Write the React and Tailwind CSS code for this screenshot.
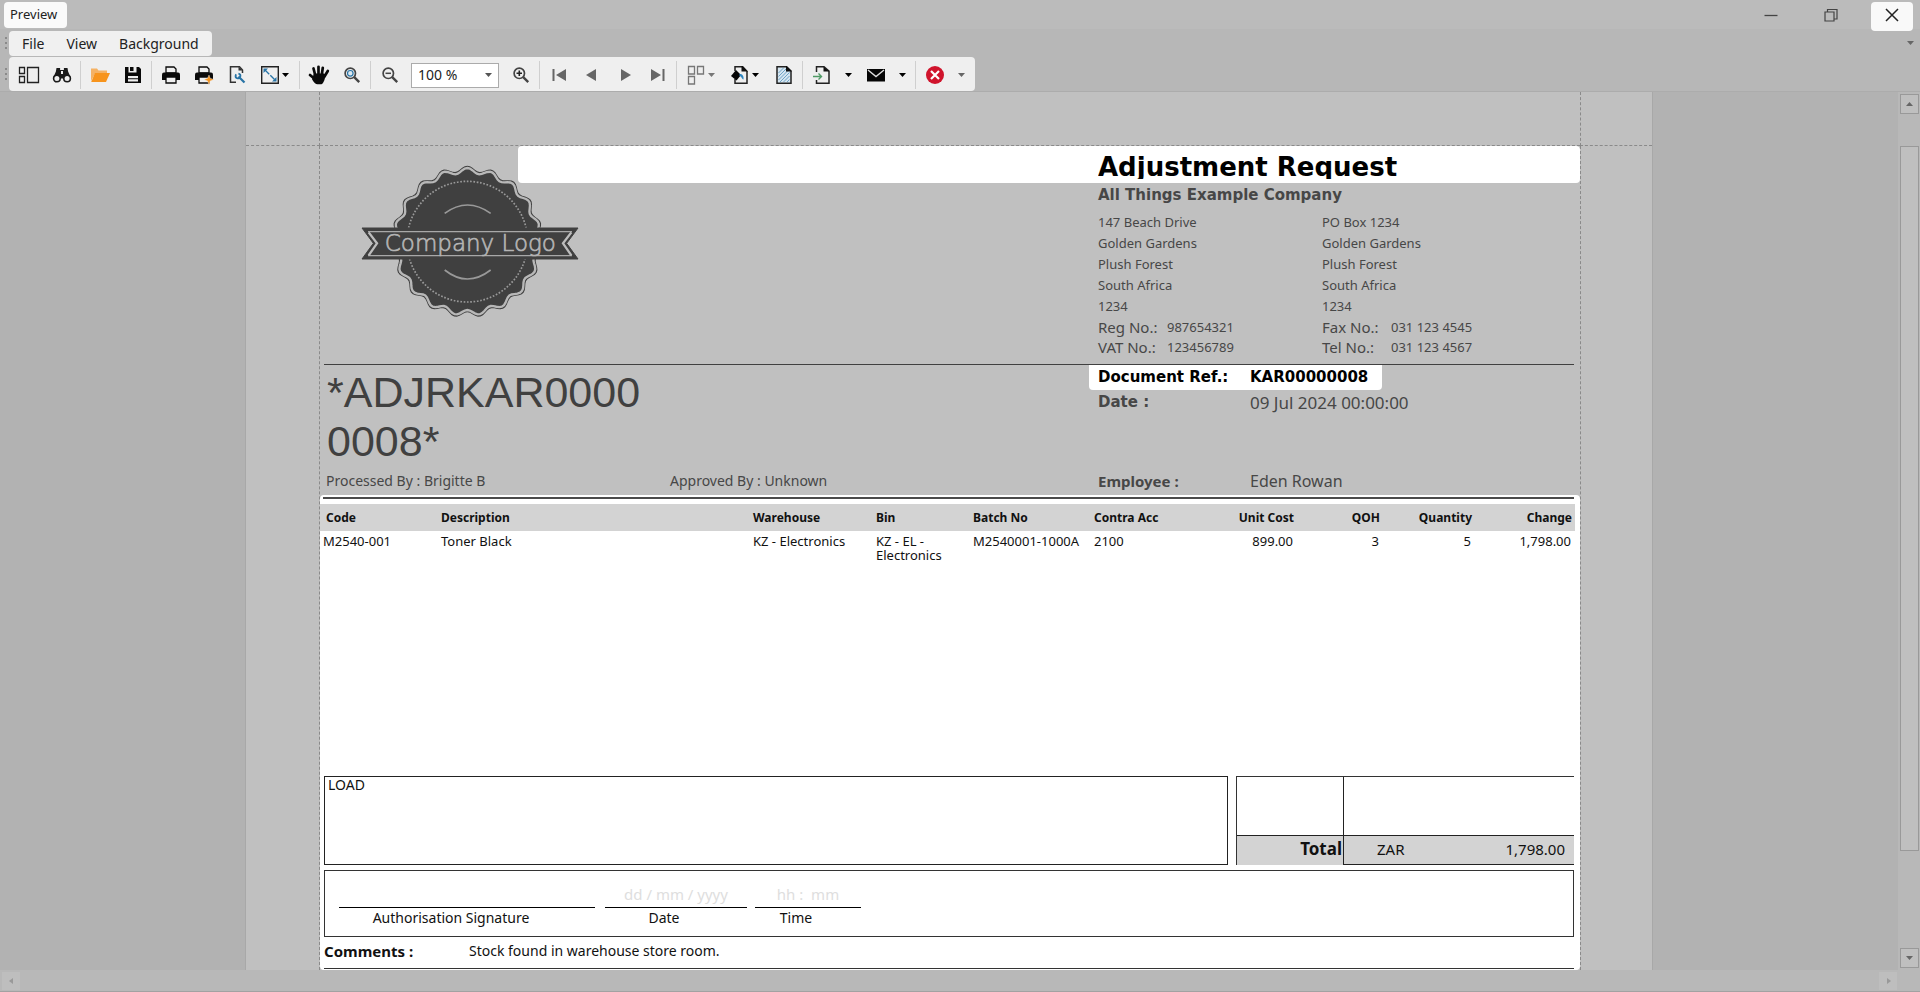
const NOTO = "font-['Noto_Sans',sans-serif]"
const DEJAVU = "font-['DejaVu_Sans',sans-serif]"

const columns = [
  { key: 'code', label: 'Code', width: 'w-[118px]' },
  { key: 'description', label: 'Description', width: 'w-[312px]' },
  { key: 'warehouse', label: 'Warehouse', width: 'w-[123px]' },
  { key: 'bin', label: 'Bin', width: 'w-[97px]' },
  { key: 'batch', label: 'Batch No', width: 'w-[121px]' },
  { key: 'contra', label: 'Contra Acc', width: 'w-[100px]' },
  { key: 'cost', label: 'Unit Cost', width: 'w-[106px]', right: true },
  { key: 'qoh', label: 'QOH', width: 'w-[86px]', right: true },
  { key: 'quantity', label: 'Quantity', width: 'w-[92px]', right: true },
  { key: 'change', label: 'Change', right: true },
]

const lines = [
  {
    code: 'M2540-001',
    description: 'Toner Black',
    warehouse: 'KZ - Electronics',
    bin: 'KZ - EL - Electronics',
    batch: 'M2540001-1000A',
    contra: '2100',
    cost: '899.00',
    qoh: '3',
    quantity: '5',
    change: '1,798.00',
  },
]

const streetAddress = ['147 Beach Drive', 'Golden Gardens', 'Plush Forest', 'South Africa', '1234']
const postalAddress = ['PO Box 1234', 'Golden Gardens', 'Plush Forest', 'South Africa', '1234']

function Svg({ w = 20, h = 20, children, className = '' }) {
  return (
    <svg width={w} height={h} viewBox={`0 0 ${w} ${h}`} fill="none" className={`shrink-0 ${className}`} aria-hidden="true">
      {children}
    </svg>
  )
}

/* ---------- toolbar icons ---------- */

const ThumbnailsIcon = () => (
  <Svg w={22} h={18}>
    <path d="M1.5 1.5h5v6h-5zM1.5 10.5h5v6h-5zM9.5 1.5h11v15h-11z" stroke="#222" strokeWidth="1.3" />
  </Svg>
)

const BinocularsIcon = () => (
  <Svg>
    <path d="M4.5 3h3.6v2h3.8V3h3.6l.6 3.5 2.6 6H1.3l2.6-6z" fill="#1a1a1a" />
    <path d="M9 6h2v3H9z" fill="#efefef" />
    <circle cx="4.9" cy="13.5" r="3.3" fill="#efefef" stroke="#1a1a1a" strokeWidth="1.6" />
    <circle cx="15.1" cy="13.5" r="3.3" fill="#efefef" stroke="#1a1a1a" strokeWidth="1.6" />
    <path d="M8 11h4v2.5H8z" fill="#1a1a1a" />
  </Svg>
)

const FolderIcon = () => (
  <Svg>
    <path d="M1 16V3.5h6L8.5 5.500H17V8H5.5z" fill="#f5b264" />
    <path d="M5 8h15l-4 9H1.2z" fill="#f7941d" />
  </Svg>
)

const SaveIcon = () => (
  <Svg w={16} h={18}>
    <path d="M0 1h14l2 2v14H0z" fill="#0a0a0a" />
    <path d="M3.5 1h8v5.5h-8zM3 10h10v5.5H3z" fill="#efefef" />
    <path d="M5 1h3.5v4H5zM3 12.2h10v1H3z" fill="#0a0a0a" />
  </Svg>
)

const PrinterShape = () => (
  <>
    <path d="M5 2h8l2 2v4H5z" fill="#efefef" stroke="#0a0a0a" strokeWidth="1.3" />
    <path d="M3 7.5h14q2 0 2 2V15H1V9.5q0-2 2-2z" fill="#0a0a0a" />
    <path d="M5 12h10v6H5z" fill="#efefef" stroke="#0a0a0a" strokeWidth="1.3" />
  </>
)

const PrintIcon = () => (
  <Svg><PrinterShape /></Svg>
)

const QuickPrintIcon = () => (
  <Svg>
    <PrinterShape />
    <path d="M15 10l1.2 3.300 3.800 1.200-3.800 1.400L15 20l-1.400-4.100L10 14.500l3.600-1.200z" fill="#f7941d" stroke="#efefef" strokeWidth=".4" />
  </Svg>
)

const PageSetupIcon = () => (
  <Svg w={18} h={20}>
    <path d="M14.5 8V5l-3-3.300h-9v15.5H8" stroke="#333" strokeWidth="1.5" />
    <path d="M10.5 1.5v4h4z" fill="#333" />
    <path d="M10.5 11.5l6 6" stroke="#2874a6" strokeWidth="2.2" />
    <circle cx="10" cy="11" r="2.400" stroke="#2874a6" strokeWidth="1.800" strokeDasharray="11.500 4" transform="rotate(-80 10 11)" />
  </Svg>
)

const ScaleIcon = () => (
  <Svg>
    <path d="M1.7 1.7h16.6v16.6H1.7z" stroke="#222" strokeWidth="1.4" />
    <path d="M5 5l10 10" stroke="#2874a6" strokeWidth="1.3" strokeDasharray="6 1.5" />
    <path d="M3.5 3.5H8L3.5 8zM16.5 16.5H12l4.5-4.5z" fill="#2874a6" />
  </Svg>
)

const HandIcon = () => (
  <Svg w={22} h={20}>
    <path d="M7.2 10L5.500 3.5M10.500 9V1.8M13.800 9.500l1-6.700M16.500 11.500l3.300-5.5M8 15l-6-5" stroke="#0a0a0a" strokeWidth="2.700" strokeLinecap="round" />
    <path d="M5.9 8.500h10l2.100 1.500c-1.200 2-1 5-2.500 7-.7 1.500-1.500 2.300-3 2.300H9.500c-2 0-3.500-1.500-5.500-5z" fill="#0a0a0a" />
  </Svg>
)

function Lens({ children }) {
  return (
    <Svg w={18} h={18}>
      <circle cx="7.3" cy="7.3" r="5.2" stroke="#444" strokeWidth="1.7" />
      <path d="M11.2 11.2l5 5" stroke="#444" strokeWidth="2.4" />
      {children}
    </Svg>
  )
}

const FirstIcon = () => (
  <Svg w={16} h={16}><path d="M1.5 2h2v12h-2zM15 2v12L5 8z" fill="#666" /></Svg>
)
const PrevIcon = () => (
  <Svg w={16} h={16}><path d="M12 2v12L2 8z" fill="#666" /></Svg>
)
const NextIcon = () => (
  <Svg w={16} h={16}><path d="M4 2v12l10-6z" fill="#666" /></Svg>
)
const LastIcon = () => (
  <Svg w={16} h={16}><path d="M12.5 2h2v12h-2zM1 2v12l10-6z" fill="#666" /></Svg>
)

const MultiPageIcon = () => (
  <Svg w={18} h={20}>
    <path d="M1.500 1.5h6v7.5h-6zM10.5 1.5h6v7.5h-6zM1.500 11.5h6V19h-6z" stroke="#777" strokeWidth="1.3" />
  </Svg>
)

const PageColorIcon = () => (
  <Svg>
    <path d="M12 1.7H5V6M5 14v4.300h12V6" stroke="#222" strokeWidth="1.5" />
    <path d="M11.500 1v5.500H17.700V6L13 1z" fill="#111" />
    <path d="M6 5l5 5-4.500 5.500L1 11z" fill="#050505" />
    <path d="M9.5 9c3 0 4.5 2 4 5.500-2-.5-1.5-3-4-3.500z" fill="#2e86c1" />
  </Svg>
)

const WatermarkIcon = () => (
  <Svg w={18} h={20}>
    <path d="M2 1.7h9.5L16 6v12.300H2z" fill="#d6e6f0" stroke="#222" strokeWidth="1.5" />
    <path d="M3.500 8l5-5M3.500 11.500l8-8M3.500 15l9.500-9.500M5 17l9.500-9.500M8.500 17l6-6M12 17l2.500-2.500" stroke="#6fa3c7" strokeWidth="1" />
    <path d="M11 1v5.500h5.700V6l-5-5z" fill="#111" />
  </Svg>
)

const ExportIcon = () => (
  <Svg>
    <path d="M4.5 7V1.7H12l5 4.500v12.100H4.5V15" stroke="#222" strokeWidth="1.5" />
    <path d="M11.500 1.5v5h5.500z" fill="#111" />
    <path d="M1 11.5h7.5M6.500 8.500l3 3-3 3" stroke="#4f9a66" strokeWidth="1.4" />
  </Svg>
)

const MailIcon = () => (
  <Svg>
    <path d="M1 4h18v12.500H1z" fill="#050505" />
    <path d="M2 5l8 6.500L18 5" stroke="#ddd" strokeWidth="1.4" />
  </Svg>
)

const StopIcon = () => (
  <Svg>
    <circle cx="10" cy="10" r="9" fill="#d0142c" />
    <path d="M6 6l8 8M14 6l-8 8" stroke="#fff" strokeWidth="2.2" />
  </Svg>
)

function Arrow({ dir = 'down', className = 'fill-black' }) {
  const d = {
    down: 'M0 1h7L3.500 5z',
    up: 'M0 5h7L3.500 1z',
    left: 'M5 0v6L1 3z',
    right: 'M2 0v6l4-3z',
  }[dir]
  return (
    <svg width="7" height="6" viewBox="0 0 7 6" className={`shrink-0 ${className}`} aria-hidden="true">
      <path d={d} />
    </svg>
  )
}

/* ---------- toolbar parts ---------- */

function Tool({ label, children }) {
  return (
    <button type="button" aria-label={label} className="flex h-full w-[33px] items-center justify-center">
      {children}
    </button>
  )
}

function MenuTool({ label, arrow, children }) {
  return (
    <button type="button" aria-label={label} className="flex h-full w-11 items-center">
      <span className="flex w-[33px] justify-center">{children}</span>
      <Arrow className={`-ml-1 ${arrow || 'fill-black'}`} />
    </button>
  )
}

function ArrowTool({ label, arrow }) {
  return (
    <button type="button" aria-label={label} className="flex h-full w-[21px] items-center justify-center">
      <Arrow className={arrow} />
    </button>
  )
}

const Separator = () => <span className="mx-[2px] h-7 w-px bg-[#cfcfcf]" />

const Grip = () => (
  <span className="flex w-[9px] flex-col items-end gap-[3px] pr-0.5">
    <i className="size-[2px] bg-[#8a8a8a]" />
    <i className="size-[2px] bg-[#8a8a8a]" />
    <i className="size-[2px] bg-[#8a8a8a]" />
  </span>
)

function TitleBar() {
  return (
    <header className="flex h-[29px] items-start justify-between bg-[#bbb] pt-0.5 pr-[7px] pl-1">
      <h1 className="flex h-[26px] w-[63px] items-center rounded bg-[#fafafa] pl-[6px] text-[13px] text-[#222]">Preview</h1>
      <div className="flex">
        <button type="button" aria-label="Minimize" className="flex h-[26px] w-[60px] items-center justify-center">
          <Svg w={14} h={14}><path d="M.5 7.500h13" stroke="#444" strokeWidth="1.3" /></Svg>
        </button>
        <button type="button" aria-label="Restore" className="flex h-[26px] w-[60px] items-center justify-center">
          <Svg w={14} h={14}><path d="M1 4h9v9H1zM3.500 4V1.500H13V11h-3" stroke="#444" strokeWidth="1.2" /></Svg>
        </button>
        <button type="button" aria-label="Close" className="relative ml-[10px] flex h-[29px] w-[42px] items-center justify-center rounded bg-[#f9f9f9] pb-[3px]">
          <Svg w={14} h={14}><path d="M1 1l12 12M13 1L1 13" stroke="#222" strokeWidth="1.5" /></Svg>
        </button>
      </div>
    </header>
  )
}

function MenuBar() {
  return (
    <nav className="flex h-7 items-center bg-[#b7b7b7] pr-[6px]">
      <Grip />
      <div className="flex h-[25px] w-[203px] items-center gap-[22px] rounded bg-[#f0f0f0] pt-px pl-[13px] text-sm text-[#222]">
        <button type="button">File</button>
        <button type="button">View</button>
        <button type="button">Background</button>
      </div>
      <button type="button" aria-label="Menu options" className="ml-auto">
        <Arrow className="fill-[#666]" />
      </button>
    </nav>
  )
}

function Toolbar() {
  return (
    <div role="toolbar" className="flex h-[35px] items-center border-b border-[#acacac] bg-[#b7b7b7]">
      <Grip />
      <div className="flex h-[34px] items-center rounded bg-[#efefef] pt-0.5 pr-[3px] pl-[3px]">
        <Tool label="Thumbnails"><ThumbnailsIcon /></Tool>
        <Tool label="Search"><BinocularsIcon /></Tool>
        <Separator />
        <Tool label="Open"><FolderIcon /></Tool>
        <Tool label="Save"><SaveIcon /></Tool>
        <Separator />
        <Tool label="Print"><PrintIcon /></Tool>
        <Tool label="Quick print"><QuickPrintIcon /></Tool>
        <Tool label="Page setup"><PageSetupIcon /></Tool>
        <MenuTool label="Scale"><ScaleIcon /></MenuTool>
        <Separator />
        <Tool label="Hand tool"><HandIcon /></Tool>
        <Tool label="Magnifier">
          <Lens><circle cx="7.3" cy="7.3" r="2.8" fill="#dce8f0" stroke="#2874a6" strokeWidth="1.2" /></Lens>
        </Tool>
        <Separator />
        <Tool label="Zoom out"><Lens><path d="M4.500 7.300H10" stroke="#444" strokeWidth="1.5" /></Lens></Tool>
        <div className="relative mx-[5px] flex items-center">
          <select aria-label="Zoom" className="h-[25px] w-[88px] appearance-none border border-[#ababab] bg-white pl-[6px] text-sm leading-5 text-[#222]">
            <option>100 %</option>
          </select>
          <Arrow className="absolute right-[7px] fill-[#555]" />
        </div>
        <Tool label="Zoom in"><Lens><path d="M4.500 7.300H10M7.300 4.500V10" stroke="#222" strokeWidth="1.6" /></Lens></Tool>
        <Separator />
        <Tool label="First page"><FirstIcon /></Tool>
        <Tool label="Previous page"><PrevIcon /></Tool>
        <Tool label="Next page"><NextIcon /></Tool>
        <Tool label="Last page"><LastIcon /></Tool>
        <Separator />
        <MenuTool label="Multiple pages" arrow="fill-[#777]"><MultiPageIcon /></MenuTool>
        <MenuTool label="Page color"><PageColorIcon /></MenuTool>
        <Tool label="Watermark"><WatermarkIcon /></Tool>
        <Separator />
        <Tool label="Export"><ExportIcon /></Tool>
        <ArrowTool label="Export options" arrow="fill-black" />
        <Tool label="Send by email"><MailIcon /></Tool>
        <ArrowTool label="Email options" arrow="fill-black" />
        <Separator />
        <Tool label="Close preview"><StopIcon /></Tool>
        <ArrowTool label="Toolbar options" arrow="fill-[#666]" />
      </div>
    </div>
  )
}

/* ---------- report ---------- */

function sealPath(cx, cy, radius, wave, lobes) {
  const points = []
  for (let deg = 0; deg < 360; deg += 2) {
    const a = (deg * Math.PI) / 180
    const r = radius + wave * Math.cos(lobes * a)
    points.push(`${(cx + r * Math.sin(a)).toFixed(1)} ${(cy - r * Math.cos(a)).toFixed(1)}`)
  }
  return `M${points.join('L')}Z`
}

function CompanyLogo({ className }) {
  return (
    <svg width="220" height="156" viewBox="60 40 660 468" fill="none" className={className} role="img" aria-label="Company Logo">
      <path d={sealPath(382, 273, 220, 8, 19)} fill="#404040" />
      <path d={sealPath(382, 273, 213, 8, 19)} stroke="#b8b8b8" strokeWidth="7" />
      <circle cx="382" cy="273" r="181" stroke="#999" strokeWidth="5" strokeDasharray="5 5" />
      <path d="M314 188q68-50 138 0M314 358q68 54 138 0" stroke="#999" strokeWidth="5" />
      <path d="M66 232h648l-34 46 34 47H66l34-47z" fill="#404040" stroke="#404040" strokeWidth="3" />
      <path d="M84 243h612M84 315h612" stroke="#a8a8a8" strokeWidth="4" />
      <path d="M86 245l25 33-25 36M694 245l-25 33 25 36" stroke="#bdbdbd" strokeWidth="7" />
      <text x="391" y="302" textAnchor="middle" fontSize="69" fill="#b4b4b4" stroke="#b4b4b4" strokeWidth="2" className="font-['DejaVu_Sans',sans-serif] font-extralight">
        Company Logo
      </text>
    </svg>
  )
}

function ContactColumn({ address, numbers }) {
  return (
    <div>
      {address.map((line) => (
        <p key={line} className="text-[13px] leading-[21px]">{line}</p>
      ))}
      <dl>
        {numbers.map(([label, value]) => (
          <div key={label} className="flex">
            <dt className="w-[69px] text-[15px] leading-5">{label}</dt>
            <dd className="text-[13px] leading-5">{value}</dd>
          </div>
        ))}
      </dl>
    </div>
  )
}

function ReportHeader() {
  return (
    <div className="text-[#474747]">
      <div className="ml-[198px] h-[37px] rounded bg-white pl-[580px]">
        <h2 className={`h-[33px] overflow-hidden text-[26px] leading-[42px] font-bold text-black ${DEJAVU}`}>Adjustment Request</h2>
      </div>
      <div className="flex h-[181px]">
        <div className="w-[778px] pl-10">
          <CompanyLogo className="-mt-[19px]" />
        </div>
        <div className="pt-0.5">
          <h3 className={`mb-[7px] text-[15px] leading-5 font-bold ${DEJAVU}`}>All Things Example Company</h3>
          <div className="grid grid-cols-[224px_1fr]">
            <ContactColumn address={streetAddress} numbers={[['Reg No.:', '987654321'], ['VAT No.:', '123456789']]} />
            <ContactColumn address={postalAddress} numbers={[['Fax No.:', '031 123 4545'], ['Tel No.:', '031 123 4567']]} />
          </div>
        </div>
      </div>
      <hr className="mr-[6px] ml-1 border-[#404040]" />
      <div className="flex h-[106px]">
        <p className="w-[769px] pt-[3px] pl-[7px] font-['Liberation_Sans',sans-serif] text-[43px] leading-[49px] text-[#404040]">
          *ADJRKAR0000
          <br />
          0008*
        </p>
        <dl>
          <div className={`flex h-[25px] w-[293px] items-center rounded-b bg-white pl-[9px] text-[15px] font-bold text-black ${DEJAVU}`}>
            <dt className="w-[152px]">Document Ref.:</dt>
            <dd>KAR00000008</dd>
          </div>
          <div className="flex h-[25px] items-center pl-[9px]">
            <dt className={`w-[152px] text-[15px] font-bold ${DEJAVU}`}>Date :</dt>
            <dd className="text-[17px] leading-[22px]">09 Jul 2024 00:00:00</dd>
          </div>
        </dl>
      </div>
      <div className="flex pb-1 pl-[6px] text-sm leading-5">
        <p className="w-[344px]">Processed By : Brigitte B</p>
        <p className="w-[428px]">Approved By : Unknown</p>
        <p className="w-[152px] text-[15px] leading-5 font-bold">Employee :</p>
        <p className="text-base leading-5">Eden Rowan</p>
      </div>
    </div>
  )
}

function LinesTable() {
  return (
    <table className="mt-[5px] w-[calc(100%-5px)] table-fixed text-left">
      <thead>
        <tr className="h-[27px] bg-[#d3d3d3] text-xs">
          {columns.map((col) => (
            <th key={col.key} scope="col" className={`px-[3px] first:pl-[6px] ${col.width || ''} ${col.right ? 'text-right' : ''}`}>
              {col.label}
            </th>
          ))}
        </tr>
      </thead>
      <tbody>
        {lines.map((line) => (
          <tr key={line.code} className="align-top text-[13px] leading-[14px]">
            {columns.map((col) => (
              <td key={col.key} className={`pt-[3px] pl-[3px] ${col.right ? 'pr-1 text-right' : 'pr-[3px]'}`}>
                {line[col.key]}
              </td>
            ))}
          </tr>
        ))}
      </tbody>
    </table>
  )
}

function SignField({ hint, label, width, labelPad = 'pr-6' }) {
  return (
    <div className={`text-center ${width}`}>
      <div className="flex h-9 items-end justify-center pb-[3px] text-[15px] leading-5 whitespace-pre text-[#dedede]">{hint}</div>
      <p className={`border-t border-black text-sm leading-5 ${labelPad}`}>{label}</p>
    </div>
  )
}

function ReportBody() {
  return (
    <div className="flex flex-1 flex-col rounded bg-white pt-0.5 text-[#111]">
      <div className="mr-[6px] ml-[3px] h-[2px] bg-[#4a4a4a]" />
      <div className="flex-1">
        <LinesTable />
      </div>
      <div className="mr-[6px] ml-1">
        <div className="flex h-[89px] gap-2">
          <div className="flex-1 border border-[#222] pl-[3px] text-sm leading-4">LOAD</div>
          <div className="grid w-[338px] grid-cols-[107px_1fr] grid-rows-[59px_1fr] border-t border-l border-[#333]">
            <div className="border-r border-b border-[#222]" />
            <div className="border-b border-[#222]" />
            <div className="border-r border-[#222] bg-[#d3d3d3] pr-px text-right text-[17px] leading-[26px] font-bold">Total</div>
            <div className="flex justify-between border-b border-[#222] bg-[#d3d3d3] pr-[9px] pl-[33px] text-[15px] leading-[26px]">
              <span>ZAR</span>
              <span>1,798.00</span>
            </div>
          </div>
        </div>
        <div className="mt-[5px] flex h-[67px] border border-[#333] pl-[14px]">
          <SignField label="Authorisation Signature" width="w-[256px]" labelPad="pr-8" />
          <SignField hint="dd / mm / yyyy" label="Date" width="ml-[10px] w-[142px]" />
          <SignField hint="hh :  mm" label="Time" width="ml-2 w-[106px]" />
        </div>
        <div className="mt-1 flex pb-[7px] leading-5">
          <p className="w-[145px] text-[15px] leading-5 font-bold">Comments :</p>
          <p className="text-sm leading-5">Stock found in warehouse store room.</p>
        </div>
        <hr className="mb-px border-[#333]" />
      </div>
    </div>
  )
}

function ReportPage() {
  return (
    <article className="mx-auto grid min-h-full w-[1408px] grid-cols-[74px_1fr_72px] grid-rows-[54px_1fr] border-x border-[#a8a8a8] bg-[#c0c0c0]">
      <div className="border-r border-b border-dashed border-[#8a8a8a]" />
      <div className="border-b border-dashed border-[#8a8a8a]" />
      <div className="border-b border-l border-dashed border-[#8a8a8a]" />
      <div className="border-r border-dashed border-[#8a8a8a]" />
      <div className="flex flex-col">
        <ReportHeader />
        <ReportBody />
      </div>
      <div className="border-l border-dashed border-[#8a8a8a]" />
    </article>
  )
}

function VerticalScrollbar() {
  return (
    <div className="flex w-[22px] flex-col bg-[#b8b8b8] py-0.5 pr-px pl-0.5">
      <button type="button" aria-label="Scroll up" className="flex h-5 items-center justify-center border border-[#999] bg-[#bfbfbf]">
        <Arrow dir="up" className="fill-[#666]" />
      </button>
      <div className="flex-[32]" />
      <div className="flex-[706] border border-[#999] bg-[#bfbfbf]" />
      <div className="flex-[97]" />
      <button type="button" aria-label="Scroll down" className="flex h-5 items-center justify-center border border-[#999] bg-[#bfbfbf]">
        <Arrow className="fill-[#666]" />
      </button>
    </div>
  )
}

function HorizontalScrollbar() {
  return (
    <div className="flex h-[22px] items-center justify-between border-b border-[#a2a2a2] bg-[#b8b8b8] pr-[23px] pl-0.5">
      <button type="button" aria-label="Scroll left" className="flex size-[18px] items-center justify-center bg-[#bebebe]">
        <Arrow dir="left" className="fill-[#999]" />
      </button>
      <button type="button" aria-label="Scroll right" className="flex size-[18px] items-center justify-center bg-[#bebebe]">
        <Arrow dir="right" className="fill-[#999]" />
      </button>
    </div>
  )
}

export default function App() {
  return (
    <div className={`flex h-screen flex-col overflow-hidden bg-[#b2b2b2] ${NOTO}`}>
      <TitleBar />
      <MenuBar />
      <Toolbar />
      <div className="flex min-h-0 flex-1">
        <main className="min-w-0 flex-1 overflow-hidden">
          <ReportPage />
        </main>
        <VerticalScrollbar />
      </div>
      <HorizontalScrollbar />
    </div>
  )
}
